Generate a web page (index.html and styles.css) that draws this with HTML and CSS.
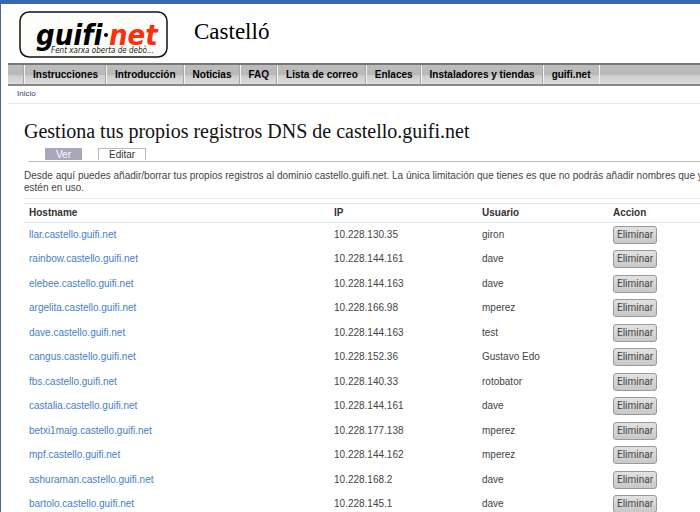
FILE: index.html
```html
<!DOCTYPE html>
<html lang="es">
<head>
<meta charset="utf-8">
<title>Castelló</title>
<link rel="stylesheet" href="styles.css">
</head>
<body>
<header class="masthead">
  <a class="logo" href="#" aria-label="guifi.net">
    <svg width="150" height="48" viewBox="0 0 150 48">
      <rect class="logo-frame" x="1" y="1" width="147" height="45" rx="9"/>
      <text class="logo-name" x="17" y="34">guifi</text>
      <circle cx="87" cy="24" r="2"/>
      <text class="logo-name logo-net" x="90" y="34">net</text>
      <text class="logo-tag" x="32" y="42">Fent xarxa oberta de debò...</text>
    </svg>
  </a>
  <div class="site-name">Castelló</div>
</header>
<nav class="menu">
  <a href="#">Instrucciones</a>
  <a href="#">Introducción</a>
  <a href="#">Noticias</a>
  <a href="#">FAQ</a>
  <a href="#">Lista de correo</a>
  <a href="#">Enlaces</a>
  <a href="#">Instaladores y tiendas</a>
  <a href="#">guifi.net</a>
</nav>
<div class="breadcrumb"><a href="#">Inicio</a></div>
<main class="content">
  <h1>Gestiona tus propios registros DNS de castello.guifi.net</h1>
  <div class="tabs">
    <a class="tab active" href="#">Ver</a>
    <a class="tab" href="#">Editar</a>
  </div>
  <p class="intro">Desde aquí puedes añadir/borrar tus propios registros al dominio castello.guifi.net. La única limitación que tienes es que no podrás añadir nombres que ya estén en uso.</p>
  <table class="records">
    <colgroup><col class="col-host"><col class="col-ip"><col class="col-user"><col></colgroup>
    <thead><tr><th>Hostname</th><th>IP</th><th>Usuario</th><th>Accion</th></tr></thead>
    <tbody>
      <tr><td><a href="#">llar.castello.guifi.net</a></td><td>10.228.130.35</td><td>giron</td><td><button>Eliminar</button></td></tr>
      <tr><td><a href="#">rainbow.castello.guifi.net</a></td><td>10.228.144.161</td><td>dave</td><td><button>Eliminar</button></td></tr>
      <tr><td><a href="#">elebee.castello.guifi.net</a></td><td>10.228.144.163</td><td>dave</td><td><button>Eliminar</button></td></tr>
      <tr><td><a href="#">argelita.castello.guifi.net</a></td><td>10.228.166.98</td><td>mperez</td><td><button>Eliminar</button></td></tr>
      <tr><td><a href="#">dave.castello.guifi.net</a></td><td>10.228.144.163</td><td>test</td><td><button>Eliminar</button></td></tr>
      <tr><td><a href="#">cangus.castello.guifi.net</a></td><td>10.228.152.36</td><td>Gustavo Edo</td><td><button>Eliminar</button></td></tr>
      <tr><td><a href="#">fbs.castello.guifi.net</a></td><td>10.228.140.33</td><td>rotobator</td><td><button>Eliminar</button></td></tr>
      <tr><td><a href="#">castalia.castello.guifi.net</a></td><td>10.228.144.161</td><td>dave</td><td><button>Eliminar</button></td></tr>
      <tr><td><a href="#">betxi1maig.castello.guifi.net</a></td><td>10.228.177.138</td><td>mperez</td><td><button>Eliminar</button></td></tr>
      <tr><td><a href="#">mpf.castello.guifi.net</a></td><td>10.228.144.162</td><td>mperez</td><td><button>Eliminar</button></td></tr>
      <tr><td><a href="#">ashuraman.castello.guifi.net</a></td><td>10.228.168.2</td><td>dave</td><td><button>Eliminar</button></td></tr>
      <tr><td><a href="#">bartolo.castello.guifi.net</a></td><td>10.228.145.1</td><td>dave</td><td><button>Eliminar</button></td></tr>
    </tbody>
  </table>
</main>
</body>
</html>
```
FILE: styles.css
```css
* { box-sizing: border-box; }
html { overflow: hidden; background: #fff; }
body {
  margin: 0;
  border-top: 4px solid #3a68b0;
  border-left: 1px solid #4a6494;
  font: 10px/12px "Liberation Sans", Arial, sans-serif;
  color: #444;
}
a { color: #4581c4; text-decoration: none; }

.masthead { display: flex; align-items: flex-start; gap: 25px; padding: 7px 0 0 18px; height: 59px; }
.logo svg { display: block; }
.logo-frame { fill: #fdfdfa; stroke: #111; stroke-width: 1.5; }
.logo-name { font: italic bold 29px "DejaVu Sans Condensed", "Open Sans", sans-serif; fill: #000; }
.logo-net { fill: #ff2d0c; }
.logo-tag { font: italic 8px "DejaVu Sans Condensed", "DejaVu Sans", sans-serif; fill: #222; }
.site-name { padding-top: 7px; font: 23px/28px "Liberation Serif", "Times New Roman", serif; color: #000; }

.menu {
  display: flex;
  height: 23px;
  margin-left: 7px;
  padding-left: 16px;
  border-top: 2px solid #777;
  border-bottom: 2px solid #888;
  background: linear-gradient(#bcbcbc, #b8b8b8 50%, #cbcbcb 52%, #dcdcdc);
}
.menu a {
  padding: 0 8px;
  border-left: 1px solid #f4f4f4;
  box-shadow: -1px 0 #a8a8a8;
  font-weight: bold;
  line-height: 19px;
  color: #000;
}
.menu a:last-child { border-right: 1px solid #f4f4f4; }

.breadcrumb { margin-left: 7px; padding: 1px 9px 0; height: 18px; border-bottom: 1px solid #e6e6e6; font-size: 8px; line-height: 13px; }
.breadcrumb a { color: #31406e; }

.content { margin: 0 -12px 0 0; padding: 15px 0 0 23px; }
h1 { margin: 0; font: 20px/24px "Liberation Serif", "Times New Roman", serif; color: #111; }
.tabs { display: flex; gap: 16px; margin: 5px 0 0 4px; padding-left: 17px; height: 14px; border-bottom: 1px solid #bbb; }
.tab { height: 12px; padding: 0 10px; border: 1px solid #bbb; border-bottom: 0; line-height: 12px; color: #333; }
.tab.active { border-color: #a9a7ba; background: #a9a7ba; color: #fff; }
.intro { margin: 8px 0 4px; padding-bottom: 4px; border-bottom: 1px solid #eee; }

.records { width: 100%; table-layout: fixed; border-collapse: collapse; }
.col-host { width: 305px; }
.col-ip { width: 148px; }
.col-user { width: 131px; }
th, td { padding: 0 5px; text-align: left; }
th { height: 19px; border-top: 1px solid #dcebf5; border-bottom: 1px solid #dcebf5; color: #333; }
td { height: 24px; }
tr:nth-child(even) td { height: 25px; }
button {
  display: block;
  height: 18px;
  padding: 0 3px;
  border: 1px solid #999;
  border-radius: 3px;
  background: linear-gradient(#e2e2e2, #c8c8c8);
  font: 10px/14px Roboto, sans-serif;
  color: #444;
}
```
